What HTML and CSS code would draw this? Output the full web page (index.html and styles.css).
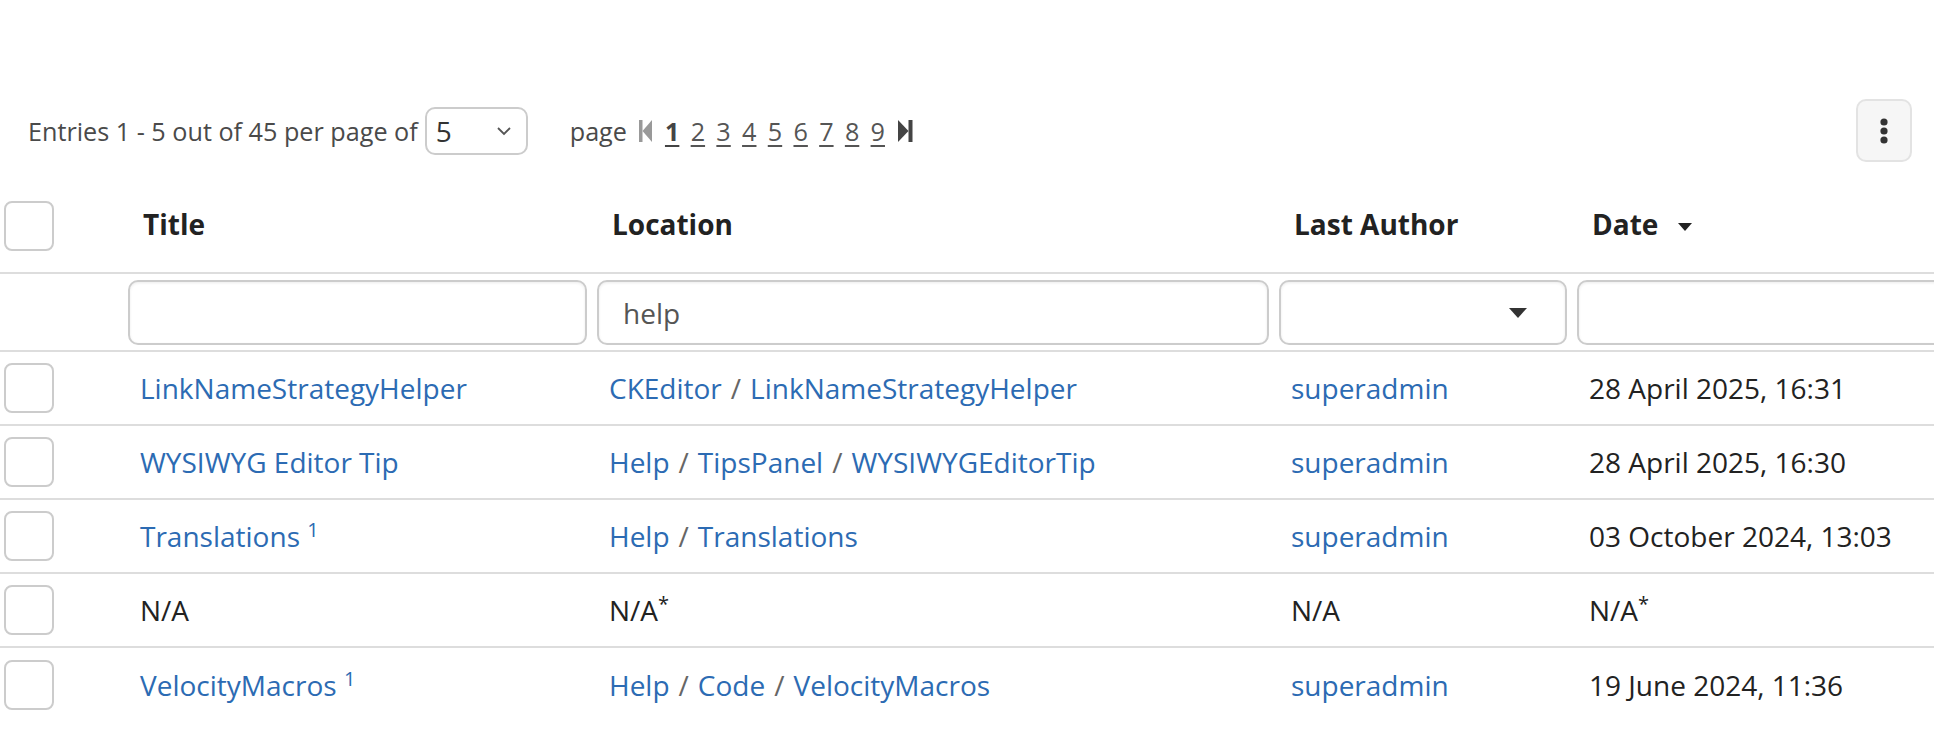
FILE: index.html
```html
<!DOCTYPE html>
<html lang="en">
<head>
    <meta charset="UTF-8">
    <title>Live Data</title>
    <link rel="stylesheet" href="styles.css">
</head>
<body>
    <div class="livedata">
        <div class="toolbar">
            <div class="entries">
                Entries 1 - 5 out of 45 per page of
                <div class="page-size">
                    <span>5</span>
                    <svg width="16" height="10" viewBox="0 0 16 10"><path d="M2 2 L8 8 L14 2" fill="none" stroke="#555" stroke-width="1.8"/></svg>
                </div>
            </div>
            <div class="pagination">
                <span class="label">page</span>
                <svg class="nav disabled" width="13" height="24" viewBox="0 0 13 24"><rect x="0" y="1" width="3.5" height="22"/><path d="M13 1 L3.5 12 L13 23 Z"/></svg>
                <a class="current">1</a>
                <a>2</a>
                <a>3</a>
                <a>4</a>
                <a>5</a>
                <a>6</a>
                <a>7</a>
                <a>8</a>
                <a>9</a>
                <svg class="nav" width="15" height="24" viewBox="0 0 15 24"><path d="M0 1 L10.5 12 L0 23 Z"/><rect x="10.5" y="1" width="4" height="22"/></svg>
            </div>
            <div class="kebab">
                <svg width="10" height="28" viewBox="0 0 10 28"><circle cx="5" cy="5" r="3.6"/><circle cx="5" cy="14" r="3.6"/><circle cx="5" cy="23" r="3.6"/></svg>
            </div>
        </div>

        <table class="grid">
            <colgroup>
                <col class="c-select">
                <col class="c-title">
                <col class="c-location">
                <col class="c-author">
                <col class="c-date">
            </colgroup>
            <thead>
                <tr class="head">
                    <th><div class="checkbox"></div></th>
                    <th>Title</th>
                    <th>Location</th>
                    <th>Last Author</th>
                    <th>Date <svg class="sort" width="14" height="8" viewBox="0 0 14 8"><path d="M0 0 L14 0 L7 8 Z"/></svg></th>
                </tr>
                <tr class="filters">
                    <td></td>
                    <td><div class="field"></div></td>
                    <td><div class="field">help</div></td>
                    <td><div class="field dropdown"><svg width="18" height="10" viewBox="0 0 18 10"><path d="M0 0 L18 0 L9 10 Z"/></svg></div></td>
                    <td><div class="field"></div></td>
                </tr>
            </thead>
            <tbody>
                <tr>
                    <td><div class="checkbox"></div></td>
                    <td><a>LinkNameStrategyHelper</a></td>
                    <td><a>CKEditor</a><span class="sep">/</span><a>LinkNameStrategyHelper</a></td>
                    <td><a>superadmin</a></td>
                    <td>28 April 2025, 16:31</td>
                </tr>
                <tr>
                    <td><div class="checkbox"></div></td>
                    <td><a>WYSIWYG Editor Tip</a></td>
                    <td><a>Help</a><span class="sep">/</span><a>TipsPanel</a><span class="sep">/</span><a>WYSIWYGEditorTip</a></td>
                    <td><a>superadmin</a></td>
                    <td>28 April 2025, 16:30</td>
                </tr>
                <tr>
                    <td><div class="checkbox"></div></td>
                    <td><a>Translations <sup>1</sup></a></td>
                    <td><a>Help</a><span class="sep">/</span><a>Translations</a></td>
                    <td><a>superadmin</a></td>
                    <td>03 October 2024, 13:03</td>
                </tr>
                <tr>
                    <td><div class="checkbox"></div></td>
                    <td>N/A</td>
                    <td>N/A<sup>*</sup></td>
                    <td>N/A</td>
                    <td>N/A<sup>*</sup></td>
                </tr>
                <tr class="last">
                    <td><div class="checkbox"></div></td>
                    <td><a>VelocityMacros <sup>1</sup></a></td>
                    <td><a>Help</a><span class="sep">/</span><a>Code</a><span class="sep">/</span><a>VelocityMacros</a></td>
                    <td><a>superadmin</a></td>
                    <td>19 June 2024, 11:36</td>
                </tr>
            </tbody>
        </table>
    </div>
</body>
</html>
```

FILE: styles.css
```css
* {
    box-sizing: border-box;
}

body {
    margin: 0;
    font-family: "Open Sans", "Liberation Sans", sans-serif;
    color: #222;
    background-color: #fff;
    overflow: hidden;
}

.livedata {
    padding-top: 99px;
}

.toolbar {
    display: flex;
    align-items: center;
    width: 1934px;
    height: 63px;
    padding: 0 22px 0 28px;
    font-size: 25.2px;
    color: #4a4a4a;
}

.entries {
    display: flex;
    align-items: center;
    white-space: nowrap;
}

.page-size {
    display: flex;
    align-items: center;
    justify-content: space-between;
    width: 103px;
    height: 48px;
    margin-left: 7px;
    padding: 0 14px 0 9px;
    border: 2px solid #ccc;
    border-radius: 10px;
    font-size: 28px;
    color: #333;
}

.pagination {
    display: flex;
    align-items: center;
    margin-left: 42px;
}

.pagination .label {
    margin-right: 12px;
}

.pagination a {
    margin-left: 11.3px;
    text-decoration: underline;
    text-underline-offset: 4px;
    text-decoration-thickness: 2px;
    color: #555;
}

.pagination svg + a {
    margin-left: 13px;
}

.pagination a.current {
    font-weight: bold;
    color: #444;
}

.nav {
    fill: #444;
}

.nav.disabled {
    fill: #999;
}

.pagination svg:last-child {
    margin-left: 13px;
}

.kebab {
    display: flex;
    align-items: center;
    justify-content: center;
    width: 56px;
    height: 63px;
    margin-left: auto;
    background-color: #f6f6f6;
    border: 2px solid #e3e3e3;
    border-radius: 10px;
    fill: #333;
}

.grid {
    width: 1993px;
    table-layout: fixed;
    border-collapse: separate;
    border-spacing: 0;
    margin-top: 18px;
    font-size: 28px;
}

.c-select { width: 124px; }
.c-title { width: 469px; }
.c-location { width: 682px; }
.c-author { width: 298px; }
.c-date { width: 420px; }

.grid th,
.grid td {
    padding: 0 16px;
    text-align: left;
    vertical-align: middle;
    white-space: nowrap;
    border-bottom: 2px solid #ddd;
}

.grid th {
    height: 94px;
    padding: 0 16px 4px 19px;
    font-weight: bold;
    color: #222;
}

.grid th:first-child,
.grid td:first-child {
    padding: 0 4px;
}

.sort {
    margin-left: 12px;
    vertical-align: 4px;
    fill: #222;
}

.filters td {
    height: 78px;
    padding: 6px 6px 5px 4px;
}

.field {
    height: 65px;
    padding: 0 24px;
    display: flex;
    align-items: center;
    border: 2px solid #ccc;
    border-radius: 10px;
    box-shadow: inset 0 1px 3px rgba(0, 0, 0, 0.08);
    color: #555;
}

.field.dropdown {
    justify-content: flex-end;
    padding-right: 38px;
    fill: #333;
}

.grid tbody td {
    height: 74px;
}

.grid tbody tr.last td {
    border-bottom: none;
}

.checkbox {
    width: 50px;
    height: 50px;
    border: 2px solid #ccc;
    border-radius: 8px;
    background-color: #fff;
}

.grid a {
    color: #2c6bb3;
}

.sep {
    padding: 0 9px;
    color: #666;
}

sup {
    font-size: 20px;
    line-height: 0;
}
```
